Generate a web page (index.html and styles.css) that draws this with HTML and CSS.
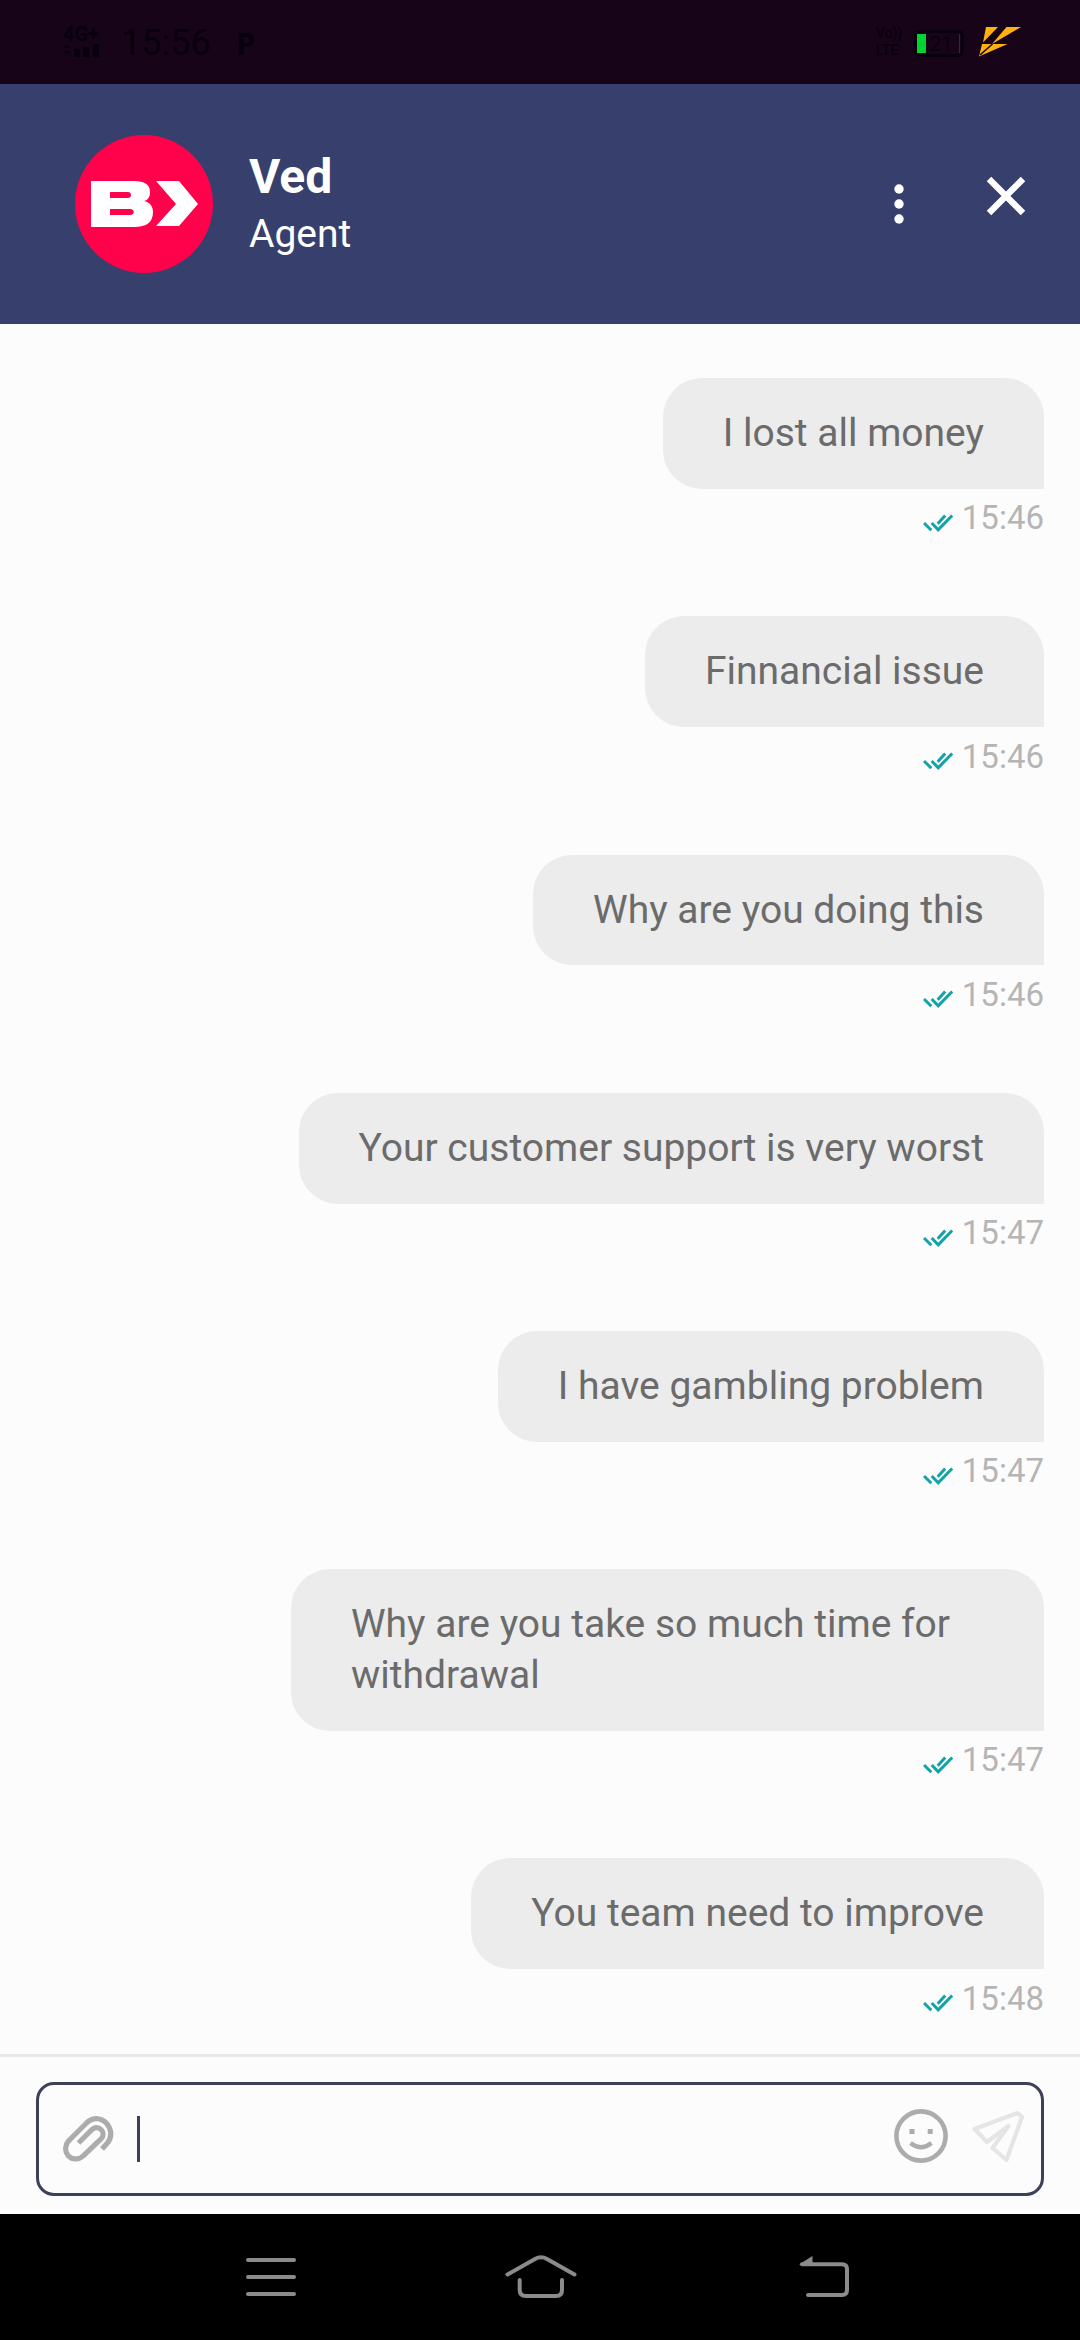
FILE: index.html
```html
<!DOCTYPE html>
<html lang="en">
<head>
<meta charset="utf-8">
<title>Support chat</title>
<link rel="stylesheet" href="styles.css">
</head>
<body>
<svg class="defs" width="0" height="0">
  <symbol id="ticks" viewBox="0 0 30 18">
    <path d="M1 9l7.300 7.300M8.700 9l6.500 6.800L29.200 1.500M14.700 9.700L22.200 1.500" fill="none" stroke="#12a3a8" stroke-width="3"/>
  </symbol>
</svg>
<div class="screen">
  <div class="status">
    <div class="network"><span>4G+</span>
      <svg width="38" height="15" viewBox="0 0 38 15"><path d="M0 5l4-4 4 4zM0 8h8l-4 4zM11 6h6v8h-6zM20 4h6v10h-6zM30 1h6v13h-6z" fill="#09000d"/></svg>
    </div>
    <span class="clock">15:56</span>
    <span class="parking">P</span>
    <div class="volte"><div>Vo))</div><div>LTE</div></div>
    <span class="battery"><i class="level"></i><span>21</span><i class="full"></i></span>
    <svg class="bolt" width="42" height="30" viewBox="0 0 42 30"><path d="M7 0H19L4 15.500zM27.500 0H42L13 17zM3 17H28.500L0 29.500z" fill="#ffb20d"/><path d="M13.500 17L1 28" stroke="#170419" stroke-width="1.600"/></svg>
  </div>
  <header class="header">
    <svg class="avatar" width="138" height="138" viewBox="0 0 138 138">
      <circle cx="69" cy="69" r="69" fill="#ff024b"/>
      <path fill="#fff" fill-rule="evenodd" d="M16 46H58C72 46 75 51 75 57C75 62 73 65 69 66C75 67 78 72 78 77C78 87 72 92 59 92H16zM35 57V63H53C57 63 57 57 53 57zM35 74V80H55C60 80 60 74 55 74z"/>
      <path fill="#fff" d="M81 46H104L123 69L104 91H81L101 69z"/>
    </svg>
    <div class="who"><div class="name">Ved</div><div class="role">Agent</div></div>
    <svg class="dots" width="10" height="40" viewBox="0 0 10 40" fill="#fff"><circle cx="5" cy="5" r="4.700"/><circle cx="5" cy="20" r="4.700"/><circle cx="5" cy="35" r="4.700"/></svg>
    <svg class="close" width="40" height="40" viewBox="0 0 40 40"><path d="M3 3L37 37M37 3L3 37" stroke="#fff" stroke-width="6.300"/></svg>
  </header>
  <main class="messages">
    <div class="message"><div class="bubble">I lost all money</div><div class="meta"><svg class="ticks"><use href="#ticks"/></svg>15:46</div></div>
    <div class="message"><div class="bubble">Finnancial issue</div><div class="meta"><svg class="ticks"><use href="#ticks"/></svg>15:46</div></div>
    <div class="message"><div class="bubble">Why are you doing this</div><div class="meta"><svg class="ticks"><use href="#ticks"/></svg>15:46</div></div>
    <div class="message"><div class="bubble">Your customer support is very worst</div><div class="meta"><svg class="ticks"><use href="#ticks"/></svg>15:47</div></div>
    <div class="message"><div class="bubble">I have gambling problem</div><div class="meta"><svg class="ticks"><use href="#ticks"/></svg>15:47</div></div>
    <div class="message"><div class="bubble">Why are you take so much time for withdrawal</div><div class="meta"><svg class="ticks"><use href="#ticks"/></svg>15:47</div></div>
    <div class="message"><div class="bubble">You team need to improve</div><div class="meta"><svg class="ticks"><use href="#ticks"/></svg>15:48</div></div>
  </main>
  <footer class="composer">
    <div class="field">
      <svg class="clip" width="52" height="48" viewBox="0 0 52 48"><path d="M39 33L44 27.500C48 23 48.500 17 46.500 12C42 1.500 31 0 23.500 7L5.500 25C2 29 1.500 35 5 39.500C9 44 16 44 20 40L38 23C41 20 40.500 16 38 13.500C35.500 11 32 11 29 13.500L15.500 27" fill="none" stroke="#acacac" stroke-width="5.200"/></svg>
      <i class="caret"></i>
      <svg class="smile" width="54" height="54" viewBox="0 0 54 54"><circle cx="27" cy="27" r="24.600" fill="none" stroke="#acacac" stroke-width="4.600"/><path d="M15.500 20h5v5h-5zM33.700 20h5v5h-5z" fill="#acacac"/><path d="M16.500 34Q27 42.500 37.500 34" fill="none" stroke="#acacac" stroke-width="4.200"/></svg>
      <svg class="send" width="54" height="54" viewBox="0 0 54 54"><path d="M46.500 3L3.500 19L16 32L37.500 16L21.500 38L35.500 50L51 7Z" fill="none" stroke="#e5e5e5" stroke-width="4.200" stroke-linejoin="round"/></svg>
    </div>
  </footer>
  <nav class="nav">
    <svg width="50" height="40" viewBox="0 0 50 40"><path d="M2 3H48M2 20H48M2 37H48" stroke="#8b8b8b" stroke-width="4" stroke-linecap="round"/></svg>
    <svg width="72" height="44" viewBox="0 0 72 44"><path d="M2.500 19.500L30 4Q36 0.500 42 4L69.500 19.500M14.700 25V35Q14.700 41 21 41H51Q57 41 57 35V25" fill="none" stroke="#8b8b8b" stroke-width="4" stroke-linecap="round"/></svg>
    <svg width="52" height="42" viewBox="0 0 52 42"><path d="M4 8.200H44Q49 8.200 49 13V34Q49 39 44 39H10" fill="none" stroke="#8b8b8b" stroke-width="4" stroke-linecap="round"/><path d="M1 8.500L14.500 0V9z" fill="#8b8b8b"/></svg>
  </nav>
</div>
</body>
</html>
```
FILE: styles.css
```css
* { box-sizing: border-box; }
body { margin: 0; font-family: Roboto, sans-serif; }
svg { display: block; flex: none; }
.defs { display: none; }
.screen { width: 1080px; height: 2340px; display: flex; flex-direction: column; background: #fcfcfc; }

.status { height: 84px; flex: none; display: flex; align-items: flex-start; background: #170419; color: #09000d; }
.network { width: 42px; margin: 26px 0 0 63px; font-size: 20px; line-height: 17px; font-weight: 700; }
.clock { width: 100px; margin: 22px 0 0 16px; font-size: 36px; line-height: 42px; }
.parking { margin: 25px 0 0 15px; font: 700 31px/36px "Open Sans", sans-serif; }
.volte { width: 30px; margin: 25px 0 0 auto; font-size: 14px; line-height: 17px; font-weight: 500; }
.battery { display: flex; align-items: center; width: 50px; height: 27px; margin: 30px 15px 0 8px; border: 3px solid #09000d; border-radius: 6px; font-size: 20px; line-height: 20px; }
.level { width: 9px; height: 19px; margin-right: 4px; background: #00d52f; }
.full { width: 1px; height: 19px; margin: 0 1px 0 auto; background: #263138; }
.bolt { margin: 27px 59px 0 0; }

.header { height: 240px; flex: none; display: flex; align-items: flex-start; background: #373f6c; color: #fff; }
.avatar { margin: 51px 0 0 75px; }
.who { margin: 66px 0 0 36px; }
.name { font-size: 48px; line-height: 54px; font-weight: 700; }
.role { font-size: 39px; line-height: 60px; }
.dots { margin: 100px 0 0 auto; }
.close { margin: 92px 54px 0 82px; }

.messages { flex: 1; min-height: 0; display: flex; flex-direction: column; padding: 54px 36px 0; }
.message { flex: none; display: flex; flex-direction: column; align-items: flex-end; margin-bottom: 75.600px; }
.message:last-child { margin-bottom: 0; }
.bubble { max-width: 753px; padding: 30px 60px; border-radius: 39px 39px 0 39px; background: #ececec; color: #6b6b6b; font-size: 39px; line-height: 50.700px; }
.meta { display: flex; align-items: center; gap: 9px; height: 52px; padding-top: 7px; color: #b5b5b5; font-size: 33px; line-height: 44px; }
.ticks { width: 30px; height: 18px; margin-top: 9px; }

.composer { height: 160px; flex: none; padding: 25px 36px 18px; border-top: 3px solid #e8e8e8; }
.field { display: flex; align-items: flex-start; height: 114px; border: 3px solid #3c4158; border-radius: 18px; }
.clip { margin: 31px 0 0 24px; }
.caret { width: 3px; height: 46px; margin: 31px 0 0 22px; background: #3c4158; }
.smile { margin: 24px 0 0 auto; }
.send { margin: 25px 16px 0 23px; }

.nav { height: 126px; flex: none; display: grid; grid-template-columns: 259px 293px 52px; align-items: center; padding-left: 246px; background: #000; }
```
